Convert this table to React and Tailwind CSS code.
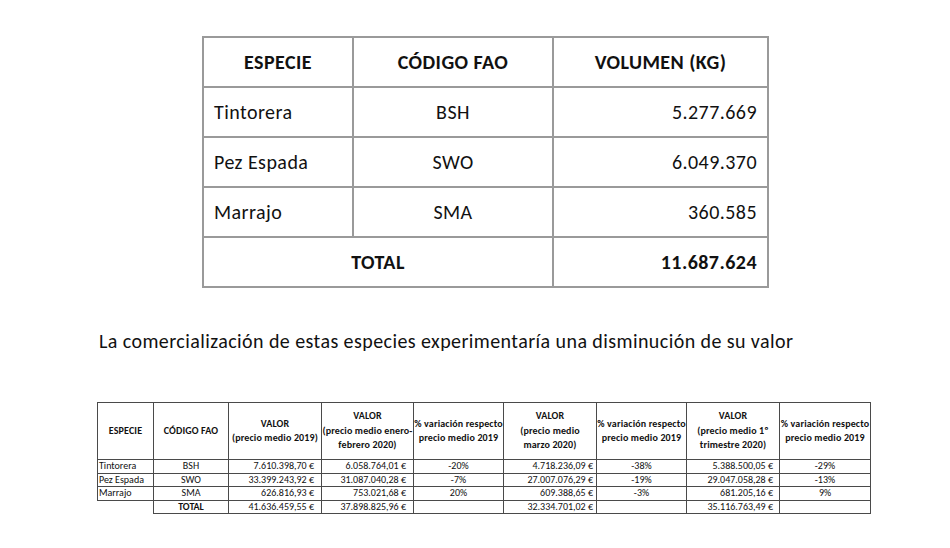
const especies = [
  { nombre: "Tintorera", fao: "BSH", kg: "5.277.669" },
  { nombre: "Pez Espada", fao: "SWO", kg: "6.049.370" },
  { nombre: "Marrajo", fao: "SMA", kg: "360.585" },
];

const valores = [
  { nombre: "Tintorera", fao: "BSH", v19: "7.610.398,70 €", v2: "6.058.764,01 €", p2: "-20%", v3: "4.718.236,09 €", p3: "-38%", vt: "5.388.500,05 €", pt: "-29%" },
  { nombre: "Pez Espada", fao: "SWO", v19: "33.399.243,92 €", v2: "31.087.040,28 €", p2: "-7%", v3: "27.007.076,29 €", p3: "-19%", vt: "29.047.058,28 €", pt: "-13%" },
  { nombre: "Marrajo", fao: "SMA", v19: "626.816,93 €", v2: "753.021,68 €", p2: "20%", v3: "609.388,65 €", p3: "-3%", vt: "681.205,16 €", pt: "9%" },
];

const top = "border-2 border-[#9a9a9a] h-[50px] p-0";
const cell = "border border-[#4a4a4a] p-0 h-[13.5px] leading-[12px] whitespace-nowrap";
const head = "border border-[#4a4a4a] p-0 h-[57px] font-bold text-center text-[10px] leading-[14.5px] tracking-[0.15px] whitespace-nowrap overflow-visible";

export default function App() {
  return (
    <div className="w-[950px] h-[548px] bg-white text-[#111] overflow-hidden font-['Carlito','Lato','Open_Sans',sans-serif]">
      <div className="pt-[36px] pl-[202px]">
        <table className="border-collapse table-fixed w-[565px] text-[20px] tracking-[0.45px]">
          <colgroup>
            <col className="w-[150px]" />
            <col className="w-[200px]" />
            <col className="w-[215px]" />
          </colgroup>
          <thead>
            <tr>
              <th className={`${top} font-bold`}>ESPECIE</th>
              <th className={`${top} font-bold`}>CÓDIGO FAO</th>
              <th className={`${top} font-bold`}>VOLUMEN (KG)</th>
            </tr>
          </thead>
          <tbody>
            {especies.map((e) => (
              <tr key={e.fao}>
                <td className={`${top} pl-[10px] text-left`}>{e.nombre}</td>
                <td className={`${top} text-center`}>{e.fao}</td>
                <td className={`${top} pr-[10px] text-right`}>{e.kg}</td>
              </tr>
            ))}
            <tr>
              <td colSpan={2} className={`${top} text-center font-bold`}>TOTAL</td>
              <td className={`${top} pr-[10px] text-right font-bold`}>11.687.624</td>
            </tr>
          </tbody>
        </table>
      </div>

      <p className="mt-[41px] ml-[99px] text-[20px] leading-[24px] tracking-[0.42px]">
        La comercialización de estas especies experimentaría una disminución de su valor
      </p>

      <div className="mt-[49px] pl-[97px]">
        <table className="border-collapse table-fixed w-[773px] text-[10px]">
          <colgroup>
            <col className="w-[56px]" />
            <col className="w-[75px]" />
            <col className="w-[93px]" />
            <col className="w-[92px]" />
            <col className="w-[90px]" />
            <col className="w-[93px]" />
            <col className="w-[90px]" />
            <col className="w-[93px]" />
            <col className="w-[91px]" />
          </colgroup>
          <thead>
            <tr>
              <th className={head}>ESPECIE</th>
              <th className={head}>CÓDIGO FAO</th>
              <th className={head}>VALOR<br />(precio medio 2019)</th>
              <th className={head}>VALOR<br />(precio medio enero-<br />febrero 2020)</th>
              <th className={head}>% variación respecto<br />precio medio 2019</th>
              <th className={head}>VALOR<br />(precio medio<br />marzo 2020)</th>
              <th className={head}>% variación respecto<br />precio medio 2019</th>
              <th className={head}>VALOR<br />(precio medio 1º<br />trimestre 2020)</th>
              <th className={head}>% variación respecto<br />precio medio 2019</th>
            </tr>
          </thead>
          <tbody>
            {valores.map((v) => (
              <tr key={v.fao}>
                <td className={`${cell} pl-[1px] text-left`}>{v.nombre}</td>
                <td className={`${cell} text-center`}>{v.fao}</td>
                <td className={`${cell} pr-[7px] text-right`}>{v.v19}</td>
                <td className={`${cell} pr-[7px] text-right`}>{v.v2}</td>
                <td className={`${cell} text-center`}>{v.p2}</td>
                <td className={`${cell} pr-[3px] text-right`}>{v.v3}</td>
                <td className={`${cell} text-center`}>{v.p3}</td>
                <td className={`${cell} pr-[6px] text-right`}>{v.vt}</td>
                <td className={`${cell} text-center`}>{v.pt}</td>
              </tr>
            ))}
            <tr>
              <td className="p-0 h-[13.5px] border-t border-[#4a4a4a]"></td>
              <td className={`${cell} text-center font-bold`}>TOTAL</td>
              <td className={`${cell} pr-[7px] text-right`}>41.636.459,55 €</td>
              <td className={`${cell} pr-[7px] text-right`}>37.898.825,96 €</td>
              <td className={cell}></td>
              <td className={`${cell} pr-[3px] text-right`}>32.334.701,02 €</td>
              <td className={cell}></td>
              <td className={`${cell} pr-[6px] text-right`}>35.116.763,49 €</td>
              <td className={cell}></td>
            </tr>
          </tbody>
        </table>
      </div>
    </div>
  );
}
